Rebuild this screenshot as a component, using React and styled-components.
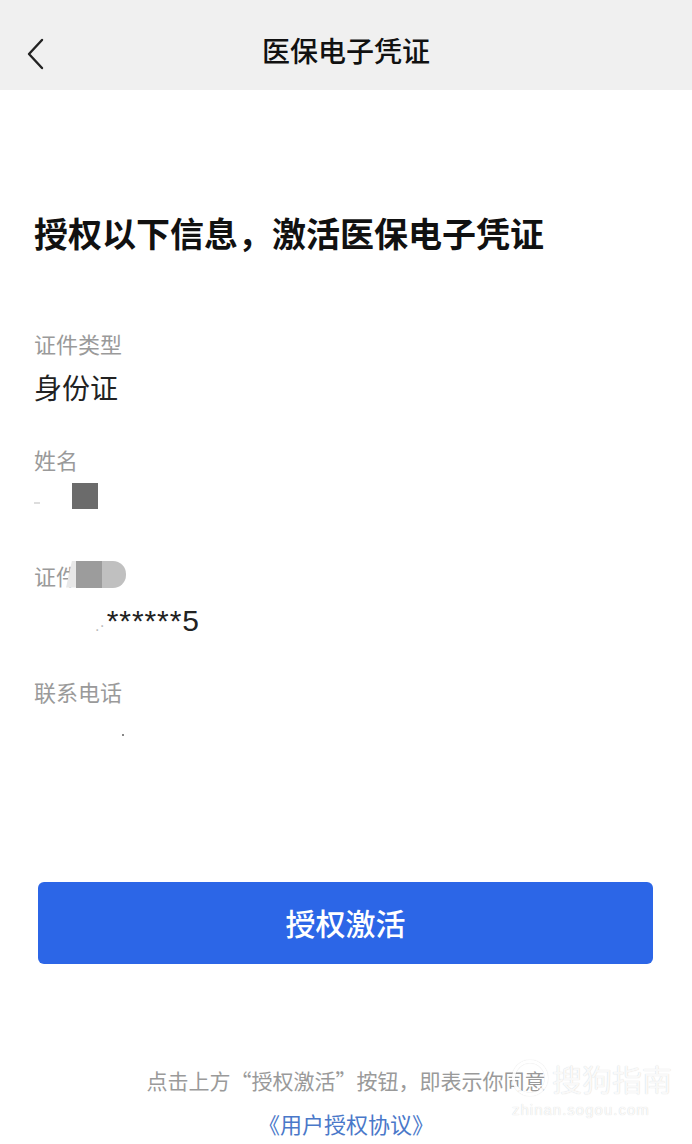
import React from 'react';
import styled, { createGlobalStyle } from 'styled-components';

const GlobalStyle = createGlobalStyle`
	html, body {
		margin: 0;
		padding: 0;
		background: #fff;
	}
	body {
		font-family: "Noto Sans CJK SC", "Noto Sans", "Liberation Sans", sans-serif;
	}
`;

const fields = [
	{ label: '证件类型', value: '身份证' },
	{ label: '姓名', value: 'name' },
	{ label: '证件', value: 'id' },
	{ label: '联系电话', value: 'phone' },
];

const App = () => {
	const renderValue = (value) => {
		if (value === 'name') {
			return (
				<>
					<Redact width={6} height={2} color='#ddd' />
					<Redact width={26} height={26} color='#6b6b6b' gap={32} />
				</>
			);
		}
		if (value === 'id') {
			return (
				<Masked>
					<Dot>.·</Dot>******5
				</Masked>
			);
		}
		if (value === 'phone') {
			return <Redact width={2} height={2} color='#888' gap={88} />;
		}
		return value;
	};

	return (
		<Page>
			<GlobalStyle />
			<Header>
				<BackButton aria-label='back'>
					<svg width='20' height='34' viewBox='0 0 20 34'>
						<polyline
							points='15,2 2,16 15,30'
							fill='none'
							stroke='#222'
							strokeWidth='2.4'
							strokeLinecap='round'
							strokeLinejoin='round'
						/>
					</svg>
				</BackButton>
				<Title>医保电子凭证</Title>
			</Header>
			<Content>
				<Heading>授权以下信息，激活医保电子凭证</Heading>
				{fields.map((f) => (
					<Field key={f.label}>
						<Label>
							{f.label}
							{f.value === 'id' ? (
								<BlurGroup>
									<Redact width={10} height={27} color='#e8e8e8' slant />
									<Redact width={26} height={27} color='#9c9c9c' />
									<Redact width={24} height={27} color='#c0c0c0' round />
								</BlurGroup>
							) : null}
						</Label>
						<Value>{renderValue(f.value)}</Value>
					</Field>
				))}
				<ActivateButton>授权激活</ActivateButton>
				<Notice>点击上方“授权激活”按钮，即表示你同意</Notice>
				<Agreement>《用户授权协议》</Agreement>
			</Content>
			<Watermark>
				<WatermarkTop>
					<LogoCircle />
					<span>搜狗指南</span>
				</WatermarkTop>
				<WatermarkUrl>zhinan.sogou.com</WatermarkUrl>
			</Watermark>
		</Page>
	);
};

export default App;

const Page = styled.div`
	position: relative;
	width: 692px;
	min-height: 1144px;
	background: #fff;
	overflow: hidden;
`;

const Header = styled.div`
	position: relative;
	height: 90px;
	background: #f0f0f0;
	display: flex;
	align-items: center;
	justify-content: center;
`;

const BackButton = styled.div`
	position: absolute;
	left: 27px;
	top: 38px;
	width: 20px;
	height: 34px;
`;

const Title = styled.div`
	font-size: 28px;
	font-weight: 500;
	color: #111;
	line-height: 1;
	margin-top: 10px;
`;

const Content = styled.div`
	padding: 0 34px;
	display: flex;
	flex-direction: column;
`;

const Heading = styled.h1`
	margin: 126px 0 0;
	font-size: 34px;
	line-height: 34px;
	font-weight: 700;
	color: #111;
`;

const Field = styled.div`
	display: flex;
	flex-direction: column;
	margin-top: 80px;

	& + & {
		margin-top: 38px;
	}
`;

const Label = styled.div`
	display: flex;
	align-items: center;
	height: 30px;
	margin-top: -2px;
	margin-bottom: 2px;
	font-size: 22px;
	line-height: 30px;
	color: #9a9a9a;
`;

const BlurGroup = styled.span`
	display: inline-flex;
	align-items: center;
	margin-left: -12px;
	margin-top: -2px;
	filter: blur(0.6px);
`;

const Value = styled.div`
	display: flex;
	align-items: center;
	height: 40px;
	margin-top: 7px;
	margin-bottom: 1px;
	font-size: 28px;
	line-height: 40px;
	color: #222;
`;

const Redact = styled.span`
	display: inline-block;
	width: ${(p) => p.width}px;
	height: ${(p) => p.height}px;
	background: ${(p) => p.color};
	margin-left: ${(p) => p.gap || 0}px;
	border-radius: ${(p) => (p.round ? '0 13px 13px 0' : '0')};
	clip-path: ${(p) => (p.slant ? 'polygon(60% 0, 100% 0, 100% 100%, 0 100%)' : 'none')};
	align-self: ${(p) => (p.height > 20 ? 'flex-start' : 'center')};
`;

const Masked = styled.span`
	margin-left: 61px;
	margin-top: 8px;
	font-family: "Liberation Sans", Arial, sans-serif;
	font-size: 30px;
	letter-spacing: 0.9px;
	color: #222;
`;

const Dot = styled.span`
	color: #bbb;
	font-size: 16px;
	letter-spacing: 0;
	margin-right: 2px;
`;

const ActivateButton = styled.button`
	margin: 126px 5px 0 4px;
	height: 82px;
	padding-bottom: 4px;
	border: none;
	border-radius: 6px;
	background: #2c66e7;
	color: #fff;
	font-family: inherit;
	font-size: 30px;
	font-weight: 500;
	cursor: pointer;
`;

const Notice = styled.div`
	margin-top: 101px;
	text-align: center;
	font-size: 21px;
	line-height: 30px;
	color: #9a9a9a;
`;

const Agreement = styled.div`
	margin-top: 13px;
	text-align: center;
	font-size: 22px;
	line-height: 30px;
	color: #4a78c9;
`;

const Watermark = styled.div`
	position: absolute;
	left: 512px;
	top: 1058px;
	display: flex;
	flex-direction: column;
	color: rgba(255, 255, 255, 0.9);
	text-shadow: 0 0 1px rgba(0, 0, 0, 0.2);
	pointer-events: none;
`;

const WatermarkTop = styled.div`
	display: flex;
	align-items: center;
	gap: 4px;
	font-size: 30px;
	line-height: 40px;
`;

const LogoCircle = styled.span`
	width: 30px;
	height: 30px;
	border-radius: 50%;
	border: 3px solid rgba(255, 255, 255, 0.9);
	box-shadow: 0 0 1px rgba(0, 0, 0, 0.22), inset 0 0 1px rgba(0, 0, 0, 0.22);
`;

const WatermarkUrl = styled.div`
	font-family: "Liberation Sans", Arial, sans-serif;
	font-size: 15px;
	line-height: 20px;
	letter-spacing: 1px;
	margin-top: 2px;
`;
